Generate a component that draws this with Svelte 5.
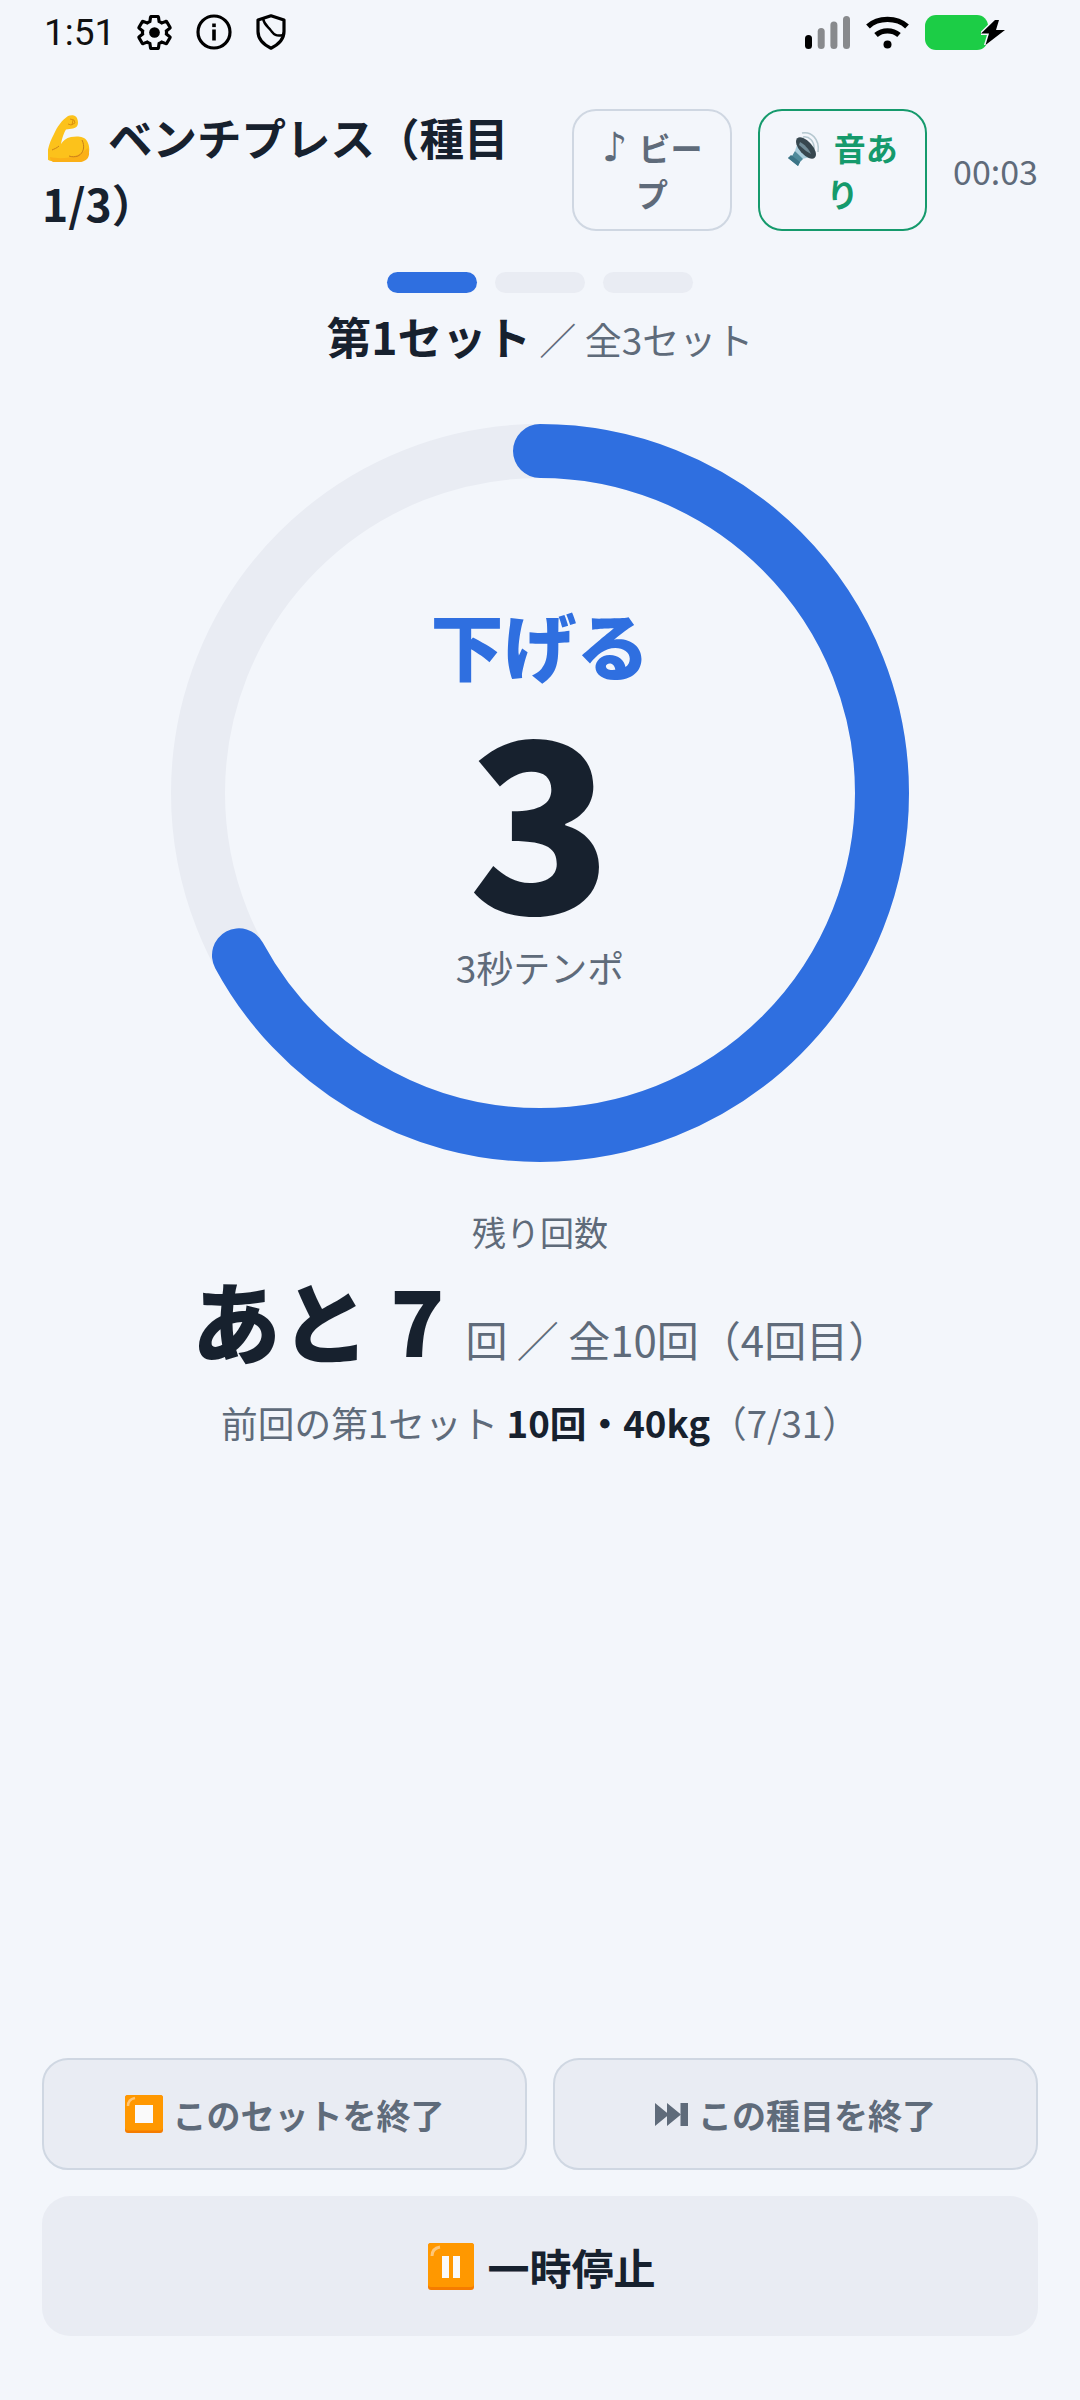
<script>
  const segments = [true, false, false];
  const circumference = 2 * Math.PI * 342;
  const progress = 0.671;
</script>

<div class="screen">
  <div class="status">
    <span class="time">1:51</span>
    <svg width="35" height="35" viewBox="1.500 1.500 21 21">
      <path fill="none" stroke="#000" stroke-width="1.900" d="M19.140 12.940c.04-.3.06-.61.06-.94 0-.32-.02-.64-.07-.94l2.030-1.580c.18-.14.23-.41.12-.61l-1.920-3.320c-.12-.22-.37-.29-.59-.22l-2.390.96c-.5-.38-1.030-.7-1.620-.94l-.36-2.540c-.04-.24-.24-.41-.48-.41h-3.840c-.24 0-.43.17-.47.41l-.36 2.540c-.59.24-1.130.57-1.620.94l-2.390-.96c-.22-.08-.47 0-.59.22L2.740 8.870c-.12.21-.08.47.12.61l2.030 1.580c-.05.3-.09.63-.09.94s.02.64.07.94l-2.030 1.580c-.18.14-.23.41-.12.61l1.920 3.320c.12.22.37.29.59.22l2.390-.96c.5.38 1.030.7 1.620.94l.36 2.540c.05.24.24.41.48.41h3.840c.24 0 .44-.17.47-.41l.36-2.540c.59-.24 1.130-.56 1.620-.94l2.390.96c.22.08.47 0 .59-.22l1.920-3.320c.12-.22.07-.47-.12-.61l-2.010-1.580z"/>
      <circle cx="12" cy="12" r="3.200" fill="#000"/>
    </svg>
    <svg width="36" height="36" viewBox="0 0 36 36" fill="none" stroke="#000" stroke-width="3.200">
      <circle cx="18" cy="18" r="16"/>
      <rect x="16.200" y="15.500" width="3.600" height="11" fill="#000" stroke="none"/>
      <rect x="16.200" y="9.500" width="3.600" height="3.600" fill="#000" stroke="none"/>
    </svg>
    <svg width="30" height="36" viewBox="0 0 30 36" fill="none" stroke="#000" stroke-width="3.200">
      <path stroke-linejoin="round" d="M15 1.800 28 6v11.500c0 7.500-5.500 13-13 16.700C7.500 30.500 2 25 2 17.500V6z"/>
      <path stroke-width="2.400" d="M7 4.500c1 6 4.500 8 7.500 11.500s4 7 13 5"/>
    </svg>
    <span class="grow"></span>
    <svg class="signal" width="45" height="33" viewBox="0 0 45 33">
      <rect x="0" y="19" width="7" height="14" rx="3.500" fill="#000"/>
      <rect x="12.700" y="12" width="7" height="21" rx="3.500" fill="#888a8d"/>
      <rect x="25.400" y="5.500" width="7" height="27.500" rx="3.500" fill="#888a8d"/>
      <rect x="38" y="0" width="7" height="33" rx="3.500" fill="#888a8d"/>
    </svg>
    <svg width="43" height="33" viewBox="0 0 43 33" fill="none" stroke="#000" stroke-width="5.400">
      <path d="M2 10.500C12 1 31 1 41 10.500"/>
      <path d="M10 19C16.500 13.500 26.500 13.500 33 19"/>
      <circle cx="21.500" cy="28.500" r="4" fill="#000" stroke="none"/>
    </svg>
    <div class="battery">
      <div class="charge"></div>
      <svg class="bolt" width="24" height="25" viewBox="0 0 24 25">
        <path d="M14 0 0 13.500h8L4.500 25 24 10h-9l3-10z" fill="#000" stroke="#f3f6fb" stroke-width="3" paint-order="stroke"/>
      </svg>
    </div>
  </div>

  <header class="top">
    <h1>
      <svg class="bicep" width="42" height="47" viewBox="18 18 42 47">
        <path d="M38 19c2-1 6-1 7 0 2 1 3 4 3 7 0 3-2 5-5 5.500l-7 1c-2 3-4 9-5 14.500 2-3 5-6 10-7 6-1 13-1 16 4 3 5 3 12 0 16-3 4-9 5-14 5-8 .5-16 0-22-1-4-1-5-3-4-6 1-7 3-14 7-21 3-7 8-14 14-18z" fill="#fcc21b"/>
        <path d="M20 60c9 2 25 3 38-9 2 5 1 9-1 11-3 3-9 4-14 4-8 .5-16 0-20-1-2-1-3-3-3-5z" fill="#fbb017"/>
        <path d="M29 49c-2 2-5 3-7 4M52 43c3 6 2 13-4 16-3 1-6 1-9 0" fill="none" stroke="#c9801a" stroke-width="1"/>
        <path d="M40 22l4 1 1 3-4 2-3-1M43 23l-1 5" fill="none" stroke="#d68a10" stroke-width=".9"/>
      </svg>
      ベンチプレス（種目1/3）
    </h1>
    <button class="chip"><span class="note">♪</span> ビープ</button>
    <button class="chip on">
      <svg class="speaker" width="38" height="38" viewBox="18 10 38 38">
        <g fill="none" stroke="#b4c7cf" stroke-width="1.500">
          <path d="M34 17c6-1 12 4 11 13"/>
          <path d="M33 13c9-2 18 6 16 19"/>
          <path d="M36 21c3 0 6 3 5 7"/>
        </g>
        <path d="M26 31 30 18l16 18-13 3z" fill="#a9cddc"/>
        <ellipse cx="37" cy="28" rx="13" ry="6.500" transform="rotate(48 37 28)" fill="#37474f"/>
        <path d="M31 22c4 2 9 7 11 12l-5-3-7-6z" fill="#6f8a96"/>
        <path d="M26 31l8 8-3 3-2 4-10-8 4-2z" fill="#4f8a9b"/>
        <path d="M19 38l10 8 2-4-9-7z" fill="#3b7486"/>
      </svg>
      音あり
    </button>
    <span class="clock">00:03</span>
  </header>

  <div class="segments">
    {#each segments as active}
      <div class="segment" class:active></div>
    {/each}
  </div>
  <p class="setline"><b>第1セット</b> ／ 全3セット</p>

  <div class="ring">
    <svg width="740" height="740" viewBox="0 0 740 740">
      <circle cx="370" cy="370" r="342" fill="none" stroke="#e9ecf3" stroke-width="54"/>
      <circle cx="370" cy="370" r="342" fill="none" stroke="#2f6fe0" stroke-width="54" stroke-linecap="round"
        stroke-dasharray="{circumference * progress} {circumference}" transform="rotate(-90 370 370)"/>
    </svg>
    <div class="ring-text">
      <div class="phase">下げる</div>
      <div class="count">3</div>
      <div class="tempo">3秒テンポ</div>
    </div>
  </div>

  <div class="remain-label">残り回数</div>
  <div class="remain"><b>あと 7</b><span>回 ／ 全10回（4回目）</span></div>
  <div class="last">前回の第1セット <b>10回・40kg</b>（7/31）</div>

  <div class="spacer"></div>

  <div class="actions">
    <button class="ghost">
      <svg width="38" height="38" viewBox="0 0 38 38">
        <rect width="38" height="38" rx="3" fill="#f57c00"/>
        <rect width="38" height="35.500" rx="3" fill="#ff9800"/>
        <path d="M3 11C3 7 5 4 10 3" fill="none" stroke="#ffc677" stroke-width="2.500"/>
        <rect x="10" y="10" width="18" height="18" fill="#fafafa"/>
      </svg>
      このセットを終了
    </button>
    <button class="ghost">
      <svg width="33" height="23" viewBox="0 0 33 23" fill="#5f6b7a">
        <path d="M0 0l14 11.500L0 23zM12 0l14 11.500L12 23z"/>
        <rect x="25.500" y="0" width="7.500" height="23"/>
      </svg>
      この種目を終了
    </button>
    <button class="pause">
      <svg width="46" height="47" viewBox="0 0 46 47">
        <rect width="46" height="47" rx="3" fill="#f57c00"/>
        <rect width="46" height="44" rx="3" fill="#ff9800"/>
        <path d="M4 13C4 8 6 5 12 4" fill="none" stroke="#ffc677" stroke-width="3"/>
        <rect x="14" y="13" width="7" height="22" fill="#fafafa"/>
        <rect x="25" y="13" width="7" height="22" fill="#fafafa"/>
      </svg>
      一時停止
    </button>
  </div>
</div>

<style>
  :global(body) {
    margin: 0;
    background: #f3f6fb;
  }
  .screen {
    width: 1080px;
    height: 2400px;
    box-sizing: border-box;
    padding: 0 42px 64px;
    display: flex;
    flex-direction: column;
    font-family: "Noto Sans CJK JP", "Noto Sans", sans-serif;
    color: #17212e;
    background: #f3f6fb;
  }
  .status {
    height: 64px;
    display: flex;
    align-items: center;
    padding-left: 2px;
    padding-right: 33px;
    gap: 24px;
  }
  .time {
    font-family: Roboto, sans-serif;
    font-size: 37px;
    color: #111;
    margin-right: -2px;
  }
  .grow {
    flex: 1;
  }
  .signal {
    margin-right: -8px;
  }
  .battery {
    position: relative;
    width: 80px;
    margin-left: -8px;
    display: flex;
  }
  .charge {
    width: 63px;
    height: 35px;
    border-radius: 11px;
    background: #1ccd46;
  }
  .bolt {
    position: absolute;
    right: 0;
    top: 5px;
  }
  .top {
    margin-top: 40px;
    display: flex;
    align-items: center;
    gap: 26px;
  }
  h1 {
    flex: 1;
    margin: 0;
    font-size: 44.500px;
    line-height: 66px;
    font-weight: 700;
  }
  .bicep {
    vertical-align: -6px;
    margin: 0 8px 0 6px;
  }
  .chip {
    flex: none;
    width: 160px;
    height: 122px;
    padding: 0 24px;
    box-sizing: border-box;
    font-family: inherit;
    font-size: 32px;
    line-height: 46px;
    font-weight: 700;
    color: #5f6b7a;
    background: transparent;
    border: 2px solid #cfd7e2;
    border-radius: 24px;
  }
  .note {
    font-family: "DejaVu Sans", sans-serif;
    font-size: 40px;
    font-weight: 400;
    line-height: 40px;
    margin-right: 4px;
  }
  .chip.on {
    width: 169px;
    color: #159a6c;
    border: 2px solid #159a6c;
  }
  .speaker {
    vertical-align: -7px;
    margin-right: 1px;
  }
  .clock {
    font-size: 34px;
    color: #5f6b7a;
  }
  .segments {
    margin-top: 36px;
    display: flex;
    justify-content: center;
    gap: 18px;
  }
  .segment {
    width: 90px;
    height: 21px;
    border-radius: 11px;
    background: #e9ecf3;
  }
  .segment.active {
    background: #2f6fe0;
  }
  .setline {
    margin: 12px 0 0;
    text-align: center;
    font-size: 37px;
    line-height: 62px;
    color: #5f6b7a;
  }
  .setline b {
    font-size: 44.500px;
    color: #17212e;
  }
  .ring {
    position: relative;
    width: 740px;
    height: 740px;
    margin: 53px auto 0;
  }
  .ring-text {
    position: absolute;
    inset: 0;
    display: flex;
    flex-direction: column;
    align-items: center;
    justify-content: center;
  }
  .phase {
    font-size: 73px;
    line-height: 96px;
    font-weight: 900;
    color: #2f6fe0;
  }
  .count {
    font-size: 236px;
    line-height: 240px;
    font-weight: 900;
  }
  .tempo {
    margin-top: 11px;
    font-size: 37px;
    line-height: 50px;
    color: #5f6b7a;
  }
  .remain-label {
    margin-top: 46px;
    text-align: center;
    font-size: 34px;
    line-height: 46px;
    color: #5f6b7a;
  }
  .remain {
    margin-top: 4px;
    padding-left: 2px;
    display: flex;
    justify-content: center;
    align-items: baseline;
    gap: 21px;
  }
  .remain b {
    font-size: 89px;
    line-height: 120px;
    font-weight: 900;
  }
  .remain span {
    font-size: 42px;
    color: #5f6b7a;
  }
  .last {
    margin-top: 17px;
    text-align: center;
    font-size: 36.700px;
    line-height: 52px;
    color: #5f6b7a;
  }
  .last b {
    color: #17212e;
  }
  .spacer {
    flex: 1;
  }
  .actions {
    display: grid;
    grid-template-columns: 1fr 1fr;
    gap: 26px;
  }
  .actions button {
    font-family: inherit;
    font-weight: 700;
    background: #e9ecf3;
    display: flex;
    align-items: center;
    justify-content: center;
    gap: 10px;
  }
  .ghost {
    height: 112px;
    font-size: 34px;
    color: #5f6b7a;
    border: 2px solid #cfd7e2;
    border-radius: 26px;
  }
  .actions .pause {
    grid-column: span 2;
    height: 140px;
    padding-left: 10px;
    gap: 13px;
    font-size: 42px;
    color: #17212e;
    border: none;
    border-radius: 28px;
  }
</style>
